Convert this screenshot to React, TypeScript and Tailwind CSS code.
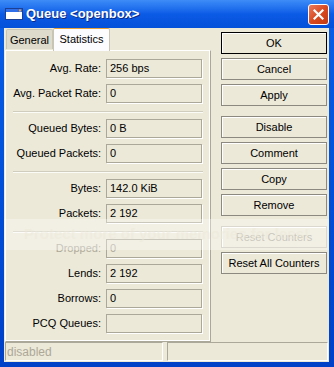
import React from 'react';

const font = 'font-["Liberation_Sans",Arial,sans-serif]';

type Row = { label: string; value: string; disabled?: boolean } | 'sep';

const rows: Row[] = [
  { label: 'Avg. Rate:', value: '256 bps' },
  { label: 'Avg. Packet Rate:', value: '0' },
  'sep',
  { label: 'Queued Bytes:', value: '0 B' },
  { label: 'Queued Packets:', value: '0' },
  'sep',
  { label: 'Bytes:', value: '142.0 KiB' },
  { label: 'Packets:', value: '2 192' },
  'sep',
  { label: 'Dropped:', value: '0', disabled: true },
  { label: 'Lends:', value: '2 192' },
  { label: 'Borrows:', value: '0' },
  { label: 'PCQ Queues:', value: '' },
];

const buttons: { text: string; gapBefore?: boolean; isDefault?: boolean; disabled?: boolean }[] = [
  { text: 'OK', isDefault: true },
  { text: 'Cancel' },
  { text: 'Apply' },
  { text: 'Disable', gapBefore: true },
  { text: 'Comment' },
  { text: 'Copy' },
  { text: 'Remove' },
  { text: 'Reset Counters', gapBefore: true, disabled: true },
  { text: 'Reset All Counters' },
];

const WindowIcon = () => (
  <svg width="18" height="12" viewBox="0 0 18 12">
    <rect x="0.5" y="0.5" width="17" height="11" fill="#fff" stroke="#1c3f94" />
    <rect x="1" y="1" width="16" height="3" fill="#2f6ee8" />
    <rect x="14" y="1.5" width="2" height="2" fill="#f0a030" />
  </svg>
);

const CloseButton = () => (
  <div className="flex h-[21px] w-[21px] items-center justify-center rounded-[3px] border border-white bg-gradient-to-br from-[#e97b5c] via-[#d9491f] to-[#c23a12]">
    <svg width="11" height="11" viewBox="0 0 11 11">
      <path d="M1.5 1.5 L9.5 9.5 M9.5 1.5 L1.5 9.5" stroke="#fff" strokeWidth="2.2" strokeLinecap="square" />
    </svg>
  </div>
);

const Field = ({ label, value, disabled }: { label: string; value: string; disabled?: boolean }) => (
  <div className="flex h-[19px] items-center">
    <div className={`w-[95px] text-right leading-none ${disabled ? 'text-[#aca899]' : 'text-black'}`}>{label}</div>
    <div
      className={`ml-[5px] flex h-[19px] w-[96px] items-center border border-[#aca899] px-[3px] leading-none shadow-[1px_1px_0_#fff] ${
        disabled ? 'text-[#aca899]' : 'text-black'
      }`}
    >
      {value}
    </div>
  </div>
);

export default function App() {
  return (
    <div className={`${font} flex h-[367px] w-[334px] flex-col bg-gradient-to-b from-[#0a5fe8] to-[#0041c8] text-[11px]`}>
      {/* title bar */}
      <div className="flex h-[28px] shrink-0 items-center bg-gradient-to-b from-[#3d8cf7] via-[#0c5be6] to-[#0450d9] pl-[5px] pr-[5px]">
        <WindowIcon />
        <span className="ml-[3px] text-[13px] font-bold text-white [text-shadow:1px_1px_0_#0b2a86]">Queue &lt;openbox&gt;</span>
        <div className="ml-auto">
          <CloseButton />
        </div>
      </div>

      {/* body */}
      <div className="relative mb-[5px] ml-[4px] mr-[5px] flex flex-1 flex-col bg-[#ece9d8]">
        <div className="flex">
          {/* left: tabs + panel */}
          <div className="ml-[1px] flex w-[206px] flex-col">
            <div className="flex h-[22px] items-end">
              <div className="mb-[1px] ml-[1px] flex h-[20px] w-[47px] items-center justify-center rounded-t-[2px] border border-b-0 border-[#c8c5b5] bg-[#dedbcc] pt-[2px] text-black">
                General
              </div>
              <div className="relative z-10 -mb-[1px] flex h-[23px] w-[57px] items-center justify-center rounded-t-[2px] border border-b-0 border-[#c8c5b5] border-t-[#e8a33a] bg-[#fcfcfe] pb-[2px] text-black">
                Statistics
              </div>
            </div>
            <div className="flex h-[292px] flex-col border border-[#aca899] border-l-white border-t-white pt-[8px] shadow-[inset_-1px_-1px_0_#fff]">
              {rows.map((r, i) =>
                r === 'sep' ? (
                  <div key={i} className="mx-[7px] mt-[8px] h-[2px] border-t border-[#d0cdbf] bg-white/80" />
                ) : (
                  <div key={i} className={i === 0 ? '' : 'mt-[6px]'}>
                    <Field {...r} />
                  </div>
                ),
              )}
            </div>
          </div>

          {/* right: buttons */}
          <div className="ml-[10px] flex w-[106px] flex-col pt-[4px]">
            {buttons.map((b) => (
              <div
                key={b.text}
                className={`flex h-[22px] items-center justify-center border bg-[#ece9d8] shadow-[inset_1px_1px_0_#fff] ${
                  b.gapBefore ? 'mt-[10px]' : b.text === 'OK' ? '' : 'mt-[4px]'
                } ${b.isDefault ? 'border-black' : b.disabled ? 'border-[#c8c5b5]' : 'border-[#8c8a80]'} ${
                  b.disabled ? 'text-[#aca899]' : 'text-black'
                }`}
              >
                {b.text}
              </div>
            ))}
          </div>
        </div>

        {/* status bar */}
        <div className="mt-auto mb-[1px] flex h-[19px] shrink-0 gap-[4px] pl-[1px] pr-[1px]">
          <div className="flex w-[158px] items-center border border-[#aca899] border-b-white border-r-white pl-[1px] text-[12px] text-[#aca899]">
            disabled
          </div>
          <div className="flex-1 border border-[#aca899] border-b-white border-r-white" />
        </div>

        {/* photobucket watermark band */}
        <div className="pointer-events-none absolute left-0 right-0 top-[191px] flex h-[31px] items-center justify-center bg-white/35">
          <span className="whitespace-nowrap text-[15px] font-bold text-[#ece9d8]/50">Protect more of your memories for less!</span>
        </div>
      </div>
    </div>
  );
}
